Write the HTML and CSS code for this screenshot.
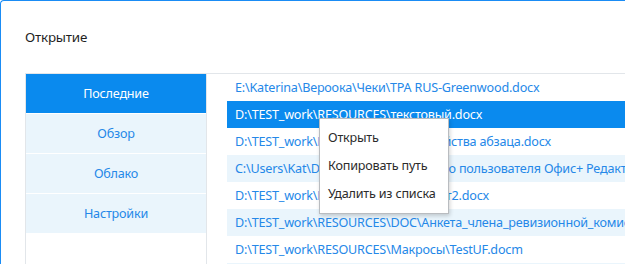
FILE: index.html
```html
<!doctype html>
<html lang="ru">
  <head>
    <meta charset="UTF-8" />
    <title>Открытие</title>
    <link rel="stylesheet" href="styles.css">
  </head>
  <body>
    <div class="dialog">
      <div class="dialog-header">
        <span class="dialog-title">Открытие</span>
      </div>
      <div class="panel">
        <nav class="nav">
          <div class="nav-item active">Последние</div>
          <div class="nav-item">Обзор</div>
          <div class="nav-item">Облако</div>
          <div class="nav-item">Настройки</div>
        </nav>
        <div class="recent">
          <div class="recent-row">E:\Katerina\Вероока\Чеки\TPA RUS-Greenwood.docx</div>
          <div class="recent-row selected">D:\TEST_work\RESOURCES\текстовый.docx</div>
          <div class="recent-row">D:\TEST_work\RESOURCES\DOC\Свойства абзаца.docx</div>
          <div class="recent-row">C:\Users\Kat\Documents\Руководство пользователя Офис+ Редактор.docx</div>
          <div class="recent-row">D:\TEST_work\RESOURCES\DOC\текст2.docx</div>
          <div class="recent-row">D:\TEST_work\RESOURCES\DOC\Анкета_члена_ревизионной_комиссии.docx</div>
          <div class="recent-row">D:\TEST_work\RESOURCES\Макросы\TestUF.docm</div>
          <div class="recent-row">D:\TEST_work\RESOURCES\Таблицы\Отчет.xlsx</div>
        </div>
      </div>
      <ul class="context-menu">
        <li class="context-item">Открыть</li>
        <li class="context-item">Копировать путь</li>
        <li class="context-item">Удалить из списка</li>
      </ul>
    </div>
  </body>
</html>
```

FILE: styles.css
```css
html,
body {
  margin: 0;
  height: 100%;
  overflow: hidden;
  background: #fff;
}
body {
  font-family: "Noto Sans", "Open Sans", sans-serif;
  font-size: 12.6px;
  letter-spacing: -0.2px;
}
.dialog {
  position: relative;
  width: 760px;
  height: 320px;
  box-sizing: border-box;
  border-top: 1px solid #1a8cf5;
  border-left: 1px solid #1a8cf5;
  border-top-left-radius: 4px;
  padding-left: 24px;
}
.dialog-header {
  height: 72px;
  display: flex;
  align-items: center;
}
.dialog-title {
  font-size: 13.4px;
  color: #1f1f1f;
}
.panel {
  display: flex;
  border-top: 1px solid #e2e6ea;
  border-left: 1px solid #e2e6ea;
  height: 260px;
}
.nav {
  width: 180px;
  flex: none;
  border-right: 1px solid #e2e6ea;
  display: flex;
  flex-direction: column;
  gap: 1px;
}
.nav-item {
  height: 39px;
  display: flex;
  align-items: center;
  justify-content: center;
  background: #eaf5fc;
  color: #2588e8;
}
.nav-item.active {
  background: #0a8aee;
  color: #fff;
}
.recent {
  flex: 1;
  padding-left: 20px;
}
.recent-row {
  height: 27px;
  line-height: 27px;
  padding-left: 8px;
  white-space: nowrap;
  overflow: hidden;
  color: #2588e8;
}
.recent-row:nth-child(even) {
  background: #eaf5fc;
}
.recent-row.selected {
  background: #0a8aee;
  color: #fff;
}
.context-menu {
  position: absolute;
  left: 318px;
  top: 117px;
  width: 128px;
  margin: 0;
  padding: 5px 0;
  list-style: none;
  background: #fff;
  border: 1px solid #b9bcc0;
  box-shadow: 1px 2px 4px rgba(0, 0, 0, 0.18);
}
.context-item {
  height: 28px;
  line-height: 28px;
  padding-left: 8px;
  color: #2b2b2b;
  white-space: nowrap;
}
```
